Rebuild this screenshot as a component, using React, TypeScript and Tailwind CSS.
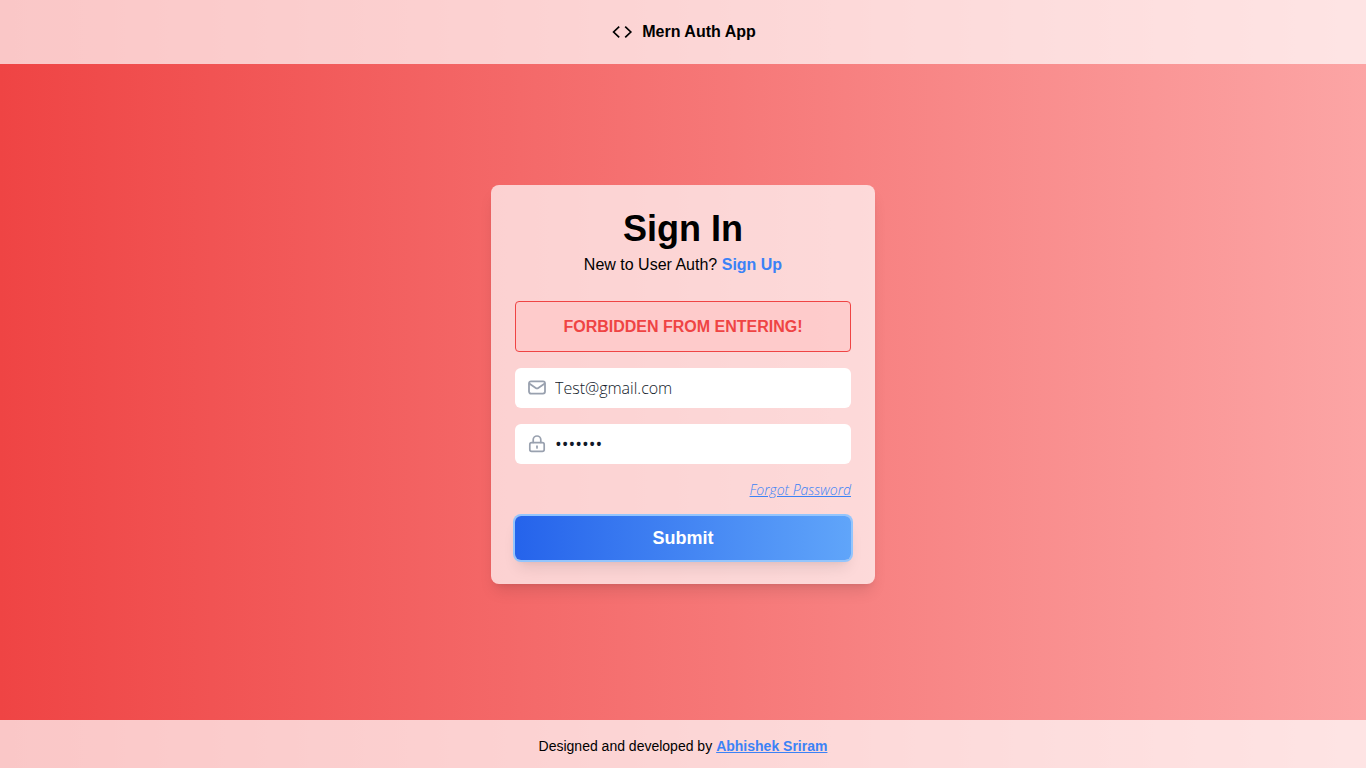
import { useState } from "react";

function CodeIcon() {
  return (
    <svg
      className="size-6 shrink-0"
      viewBox="0 0 24 24"
      fill="none"
      stroke="currentColor"
      strokeWidth="1.7"
      strokeLinejoin="miter"
      aria-hidden="true"
    >
      <path d="M9.2 6.6 3.6 12l5.6 5.4M15.2 6.6l5.6 5.4-5.6 5.4" />
    </svg>
  );
}

function MailIcon() {
  return (
    <svg
      className="size-5 shrink-0 text-gray-400"
      viewBox="0 0 20 20"
      fill="none"
      stroke="currentColor"
      strokeWidth="1.8"
      strokeLinecap="round"
      strokeLinejoin="round"
      aria-hidden="true"
    >
      <rect x="2" y="3.4" width="16" height="12.2" rx="2" />
      <path d="M2.6 5.8 8.7 10a2.3 2.3 0 0 0 2.6 0L17.4 5.8" />
    </svg>
  );
}

function LockIcon() {
  return (
    <svg
      className="size-5 shrink-0 text-gray-400"
      viewBox="0 0 20 20"
      fill="none"
      stroke="currentColor"
      strokeWidth="1.7"
      strokeLinecap="round"
      strokeLinejoin="round"
      aria-hidden="true"
    >
      <rect x="2.8" y="8.6" width="14.4" height="8.8" rx="1.8" />
      <path d="M6.2 8.4V5.8a3.8 3.8 0 0 1 7.6 0v2.6" />
      <path d="M10 12.2v1.8" />
    </svg>
  );
}

export default function App() {
  const [email, setEmail] = useState("Test@gmail.com");
  const [password, setPassword] = useState("secret1");

  return (
    <div className="flex min-h-screen flex-col bg-linear-to-r/srgb from-[#ef4444] to-[#fca5a5] font-['Liberation_Sans',Arial,sans-serif] text-black">
      <header className="flex h-16 items-center justify-center gap-2 bg-white/70">
        <CodeIcon />
        <span className="font-bold">Mern Auth App</span>
      </header>

      <main className="flex flex-1 items-center justify-center px-4 pb-4">
        <form
          className="flex w-full max-w-sm flex-col gap-4 rounded-lg bg-white/70 p-6 shadow-lg"
          onSubmit={(event) => event.preventDefault()}
        >
          <div className="mb-2 text-center">
            <h1 className="mb-1 text-4xl font-bold">Sign In</h1>
            <p>
              New to User Auth?{" "}
              <a href="#signup" className="font-bold text-[#3b82f6]">
                Sign Up
              </a>
            </p>
          </div>

          <p
            role="alert"
            className="rounded-sm border border-[#ef4444] bg-[#fecaca]/90 py-3 text-center leading-[25px] font-bold text-[#ef4444]"
          >
            FORBIDDEN FROM ENTERING!
          </p>

          <label className="flex h-10 items-center gap-2 rounded-md bg-white px-3">
            <MailIcon />
            <input
              type="email"
              aria-label="Email"
              value={email}
              onChange={(event) => setEmail(event.target.value)}
              className="min-w-0 flex-1 bg-transparent font-['Open_Sans','Noto_Sans',sans-serif] font-light text-gray-900 outline-none"
            />
          </label>

          <label className="flex h-10 items-center gap-2 rounded-md bg-white px-3">
            <LockIcon />
            <input
              type="password"
              aria-label="Password"
              value={password}
              onChange={(event) => setPassword(event.target.value)}
              className="min-w-0 flex-1 bg-transparent font-['Open_Sans','Noto_Sans',sans-serif] text-lg text-gray-900 outline-none"
            />
          </label>

          <a
            href="#forgot"
            className="self-end font-['Open_Sans','Noto_Sans',sans-serif] text-sm font-light text-[#3b82f6] italic underline"
          >
            Forgot Password
          </a>

          <button
            type="submit"
            className="h-11 rounded-md bg-linear-to-r/srgb from-[#2563eb] to-[#60a5fa] text-lg font-bold text-white shadow-lg ring-2 ring-[#93c5fd]"
          >
            Submit
          </button>
        </form>
      </main>

      <footer className="flex h-12 items-center justify-center gap-1 bg-white/70 pt-1 text-sm">
        <span>Designed and developed by</span>
        <a href="#author" className="font-bold text-[#3b82f6] underline">
          Abhishek Sriram
        </a>
      </footer>
    </div>
  );
}
